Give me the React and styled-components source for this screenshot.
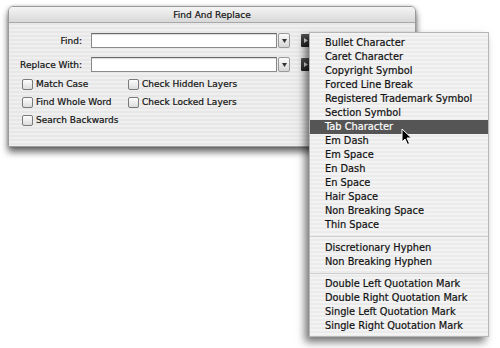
import React from "react";
import styled, { createGlobalStyle } from "styled-components";

const Global = createGlobalStyle`
  html, body { margin: 0; padding: 0; background: #ffffff; }
  body {
    font-family: "DejaVu Sans", "Liberation Sans", sans-serif;
    -webkit-text-stroke: 0.2px currentColor;
  }
`;

const Stage = styled.div`
  position: relative;
  width: 500px;
  height: 348px;
  overflow: hidden;
  background: #fff;
  padding: 6px 0 0 8px;
  box-sizing: border-box;
`;

const Dialog = styled.div`
  width: 408px;
  height: 141px;
  border-radius: 5px 5px 0 0;
  border: 1px solid #9a9a9a;
  box-sizing: border-box;
  overflow: hidden;
  background: repeating-linear-gradient(to bottom, #e7e7e7 0 2px, #efefef 2px 4px);
  box-shadow: 0 5px 7px rgba(0, 0, 0, 0.6), 0 0 3px rgba(0, 0, 0, 0.25);
  display: flex;
  flex-direction: column;
`;

const TitleBar = styled.div`
  height: 15px;
  border-bottom: 1px solid #a8a8a8;
  background: linear-gradient(to bottom, #f4f4f4, #d8d8d8);
  display: flex;
  align-items: center;
  justify-content: center;
  font-size: 9px;
  color: #111;
`;

const Body = styled.div`
  padding: 10px 0 0 0;
  display: flex;
  flex-direction: column;
`;

const FieldRow = styled.div`
  display: flex;
  align-items: center;
  height: 15px;
  margin-bottom: ${(p) => p.$gap}px;
`;

const Label = styled.div`
  width: 73px;
  text-align: right;
  font-size: 9px;
  color: #111;
  margin-right: 9px;
`;

const Combo = styled.div`
  display: flex;
  width: 199px;
  height: 15px;
`;

const Field = styled.div`
  flex: 1;
  background: #fff;
  border: 1px solid #8a8a8a;
  border-top-color: #6a6a6a;
  box-shadow: inset 0 1px 1px rgba(0, 0, 0, 0.15);
`;

const ArrowBtn = styled.div`
  width: 10px;
  margin-left: 1px;
  border: 1px solid #9a9a9a;
  border-radius: 2px;
  background: linear-gradient(to bottom, #fafafa, #d6d6d6);
  display: flex;
  align-items: center;
  justify-content: center;
`;

const PopBtn = styled.div`
  width: 10px;
  height: 13px;
  margin-left: 11px;
  background: linear-gradient(to bottom, #555, #222);
  border-radius: 1px;
  display: flex;
  align-items: center;
  justify-content: center;
`;

const Checks = styled.div`
  display: grid;
  grid-template-columns: 106px auto;
  grid-auto-rows: 18px;
  padding-left: 13px;
  margin-top: 3px;
`;

const CheckItem = styled.label`
  display: flex;
  align-items: center;
  font-size: 9px;
  color: #111;
  white-space: nowrap;
`;

const Box = styled.span`
  width: 9px;
  height: 9px;
  border: 1px solid #7a7a7a;
  border-radius: 2px;
  background: linear-gradient(to bottom, #fdfdfd, #dcdcdc);
  margin-right: 3px;
  flex: none;
`;

const Menu = styled.div`
  position: absolute;
  left: 309px;
  top: 32px;
  width: 180px;
  height: 305px;
  box-sizing: border-box;
  padding: 3px 0 5px;
  background: repeating-linear-gradient(to bottom, #f3f3f3 0 2px, #ebebeb 2px 4px);
  border: 1px solid #b5b5b5;
  box-shadow: -4px 5px 8px rgba(0, 0, 0, 0.55);
`;

const Item = styled.div`
  height: 14px;
  line-height: 14px;
  padding-left: 15px;
  font-size: 9.8px;
  white-space: nowrap;
  color: ${(p) => (p.$active ? "#fff" : "#111")};
  background: ${(p) => (p.$active ? "#555" : "transparent")};
`;

const Sep = styled.div`
  height: ${(p) => p.$h}px;
  display: flex;
  align-items: center;
  &::after {
    content: "";
    flex: 1;
    height: 1px;
    background: #cfcfcf;
  }
`;

const Cursor = styled.svg`
  position: absolute;
  left: 401px;
  top: 128px;
`;

const groups = [
  [
    "Bullet Character",
    "Caret Character",
    "Copyright Symbol",
    "Forced Line Break",
    "Registered Trademark Symbol",
    "Section Symbol",
    "Tab Character",
    "Em Dash",
    "Em Space",
    "En Dash",
    "En Space",
    "Hair Space",
    "Non Breaking Space",
    "Thin Space",
  ],
  ["Discretionary Hyphen", "Non Breaking Hyphen"],
  [
    "Double Left Quotation Mark",
    "Double Right Quotation Mark",
    "Single Left Quotation Mark",
    "Single Right Quotation Mark",
  ],
];

const DownTri = () => (
  <svg width="5" height="4" viewBox="0 0 5 4">
    <path d="M0 0 L5 0 L2.5 4 Z" fill="#333" />
  </svg>
);

const RightTri = () => (
  <svg width="4" height="5" viewBox="0 0 4 5">
    <path d="M0 0 L4 2.5 L0 5 Z" fill="#ddd" />
  </svg>
);

const Row = ({ label, gap }) => (
  <FieldRow $gap={gap}>
    <Label>{label}</Label>
    <Combo>
      <Field />
      <ArrowBtn>
        <DownTri />
      </ArrowBtn>
    </Combo>
    <PopBtn>
      <RightTri />
    </PopBtn>
  </FieldRow>
);

export default function App() {
  return (
    <Stage>
      <Global />
      <Dialog>
        <TitleBar>Find And Replace</TitleBar>
        <Body>
          <Row label="Find:" gap={9} />
          <Row label="Replace With:" gap={0} />
          <Checks>
            <CheckItem><Box />Match Case</CheckItem>
            <CheckItem><Box />Check Hidden Layers</CheckItem>
            <CheckItem><Box />Find Whole Word</CheckItem>
            <CheckItem><Box />Check Locked Layers</CheckItem>
            <CheckItem><Box />Search Backwards</CheckItem>
          </Checks>
        </Body>
      </Dialog>
      <Menu>
        {groups.map((g, gi) => (
          <React.Fragment key={gi}>
            {gi > 0 && <Sep $h={gi === 1 ? 9 : 8} />}
            {g.map((t) => (
              <Item key={t} $active={t === "Tab Character"}>
                {t}
              </Item>
            ))}
          </React.Fragment>
        ))}
      </Menu>
      <Cursor width="12" height="18" viewBox="0 0 12 18">
        <path
          d="M1 1 L1 14 L4 11 L6.5 16.5 L8.5 15.5 L6 10 L10.5 10 Z"
          fill="#000"
          stroke="#fff"
          strokeWidth="1"
          strokeLinejoin="round"
        />
      </Cursor>
    </Stage>
  );
}
